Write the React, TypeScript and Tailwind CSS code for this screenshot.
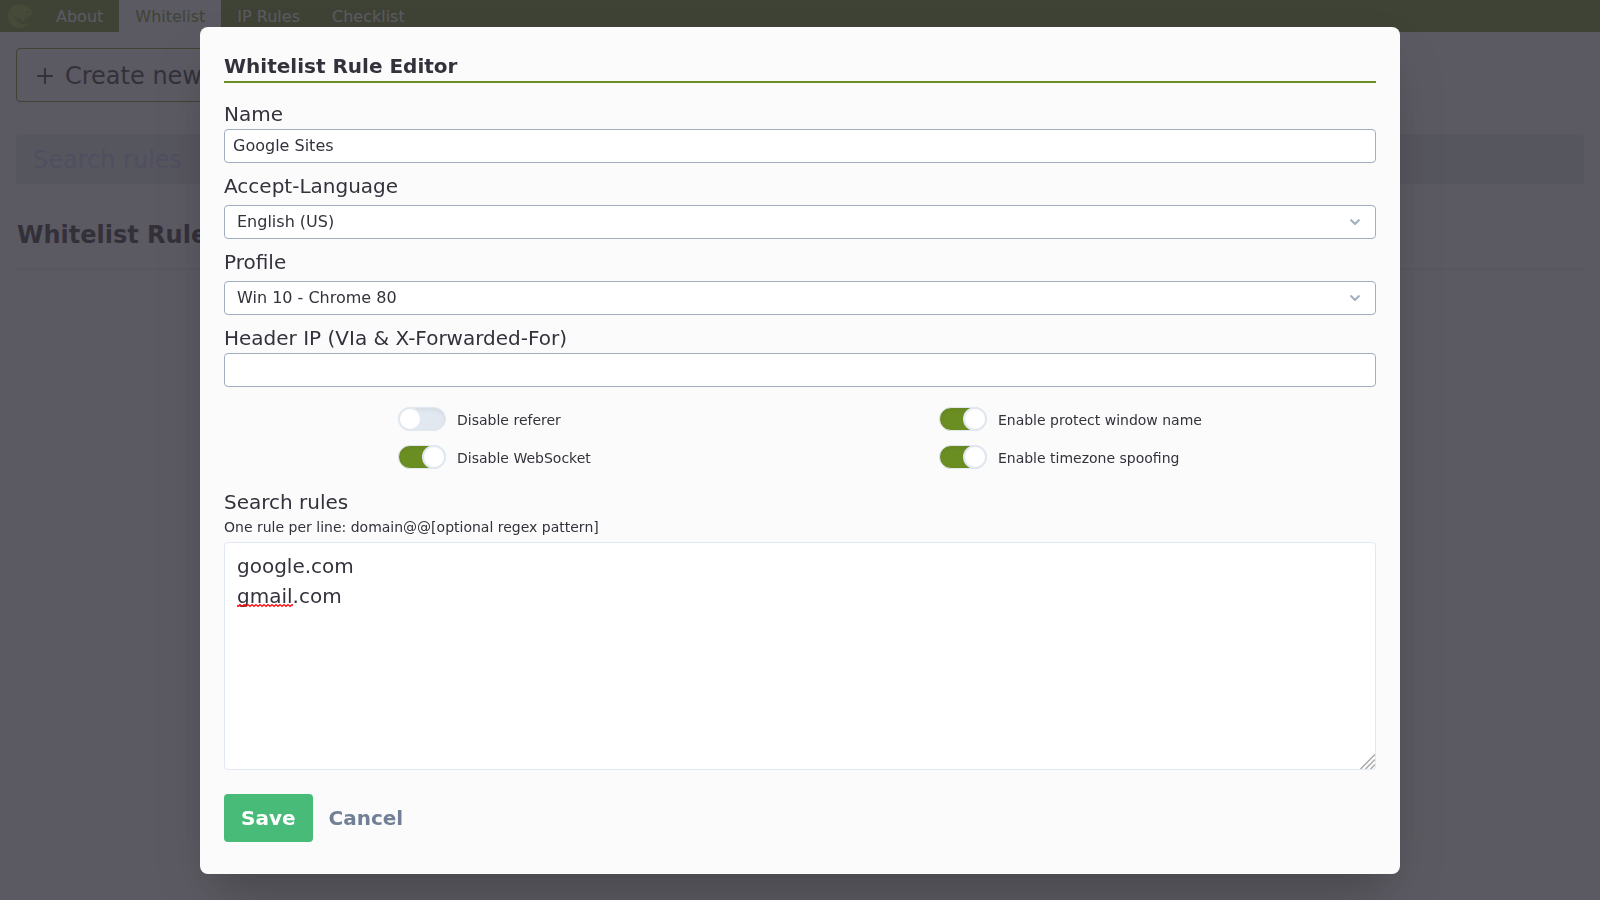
import { useState } from 'react';
import type { ReactNode } from 'react';

const tabs = ['About', 'Whitelist', 'IP Rules', 'Checklist'];

function Logo() {
  return (
    <svg viewBox="0 0 24 24" className="size-6" aria-hidden="true">
      <path
        fill="#8bb32e"
        d="M10.5 0.2C4.6 0.8 0 5.6 0 12c0 6.6 5 11.8 11.4 11.8 4.6 0 8.4-2 10.4-5.6-2.600 1.900-5.400 2.500-8.200 1.700-3.600-1-6.400-3.600-7.800-7.600 1.900 1.700 4.200 2.500 6.800 2.300.6 1.900 2.100 3 4.600 3.200-.7-1.200-.8-2.300-.3-3.300 1.300-.3 2.400-.1 3.500.5-.1-1.200-.6-2-1.500-2.600 2-.2 3.800-.9 5.100-2.400-.1-1.700-.6-3-1.600-3.900C21.600 3.400 20 2 18 .5c.1 1 .2 1.700.1 2.300C16 .6 13.400-.1 10.500.2z"
      />
      <circle cx="20" cy="8" r="0.9" fill="#55731b" />
    </svg>
  );
}

function PlusIcon() {
  return (
    <svg viewBox="0 0 24 24" className="mr-2 size-6" fill="none" stroke="currentColor" strokeWidth="2" strokeLinecap="round" aria-hidden="true">
      <path d="M12 5v14M5 12h14" />
    </svg>
  );
}

function Field({ id, label, children }: { id: string; label: string; children: ReactNode }) {
  return (
    <div className="mb-2">
      <label htmlFor={id} className="block text-xl leading-[30px]">
        {label}
      </label>
      {children}
    </div>
  );
}

function TextInput({ id, value }: { id: string; value: string }) {
  return (
    <input
      id={id}
      type="text"
      defaultValue={value}
      className="block w-full rounded border border-[#a0aec0] bg-white px-2 py-1 text-base leading-6"
    />
  );
}

function Select({ id, options }: { id: string; options: string[] }) {
  return (
    <div className="relative mt-1">
      <select
        id={id}
        className="block w-full appearance-none rounded border border-[#a0aec0] bg-white py-1 pr-10 pl-3 text-base leading-6"
      >
        {options.map((option) => (
          <option key={option}>{option}</option>
        ))}
      </select>
      <svg viewBox="0 0 24 24" className="pointer-events-none absolute top-1/2 right-[9px] size-6 -translate-y-1/2" fill="#a0aec0" aria-hidden="true">
        <path d="M15.3 9.3a1 1 0 0 1 1.4 1.4l-4 4a1 1 0 0 1-1.4 0l-4-4a1 1 0 0 1 1.4-1.4l3.3 3.29 3.3-3.29z" />
      </svg>
    </div>
  );
}

function Toggle({ label, initial }: { label: string; initial: boolean }) {
  const [on, setOn] = useState(initial);
  return (
    <label className="flex items-end text-sm leading-[22px]">
      <input
        type="checkbox"
        checked={on}
        onChange={() => setOn(!on)}
        className="mr-[11px] h-6 w-12 shrink-0 appearance-none rounded-full border border-[#e2e8f0] bg-[#e2e8f0] shadow-[inset_0_2px_4px_0_rgba(0,0,0,0.06)] before:-m-px before:block before:size-6 before:rounded-full before:border-2 before:border-[#e2e8f0] before:bg-white checked:bg-[#6b8e23] checked:before:ml-[23px]"
      />
      {label}
    </label>
  );
}

function RuleEditor() {
  return (
    <form
      role="dialog"
      aria-labelledby="editor-title"
      onSubmit={(event) => event.preventDefault()}
      className="w-3/4 rounded-lg bg-[#fbfbfb] px-6 pt-6 pb-8 shadow-2xl"
    >
      <h2 id="editor-title" className="mb-4 border-b-2 border-[#6b8e23] text-xl leading-[30px] font-bold">
        Whitelist Rule Editor
      </h2>
      <Field id="name" label="Name">
        <TextInput id="name" value="Google Sites" />
      </Field>
      <Field id="language" label="Accept-Language">
        <Select id="language" options={['English (US)']} />
      </Field>
      <Field id="profile" label="Profile">
        <Select id="profile" options={['Win 10 - Chrome 80']} />
      </Field>
      <Field id="header-ip" label="Header IP (VIa & X-Forwarded-For)">
        <TextInput id="header-ip" value="" />
      </Field>
      <div className="mt-5 mb-[18px] flex justify-around">
        <div className="flex flex-col gap-3.5">
          <Toggle label="Disable referer" initial={false} />
          <Toggle label="Disable WebSocket" initial />
        </div>
        <div className="flex flex-col gap-3.5">
          <Toggle label="Enable protect window name" initial />
          <Toggle label="Enable timezone spoofing" initial />
        </div>
      </div>
      <label htmlFor="rules" className="block text-xl leading-[30px]">
        Search rules
      </label>
      <p className="mb-1 text-sm leading-[21px]">One rule per line: domain@@[optional regex pattern]</p>
      <div className="relative">
        <textarea
          id="rules"
          spellCheck={false}
          defaultValue={'google.com\ngmail.com'}
          className="block h-[228px] w-full resize-none rounded border border-[#e2e8f0] bg-white px-3 py-2 text-xl leading-[30px]"
        />
        <svg className="pointer-events-none absolute top-[62px] left-[13px] h-1 w-14" aria-hidden="true">
          <defs>
            <pattern id="squiggle" width="4" height="4" patternUnits="userSpaceOnUse">
              <path d="M-1 0.5L1 2.5L3 0.5L5 2.5" fill="none" stroke="#ff0000" strokeWidth="1.2" />
            </pattern>
          </defs>
          <rect width="56" height="4" fill="url(#squiggle)" />
        </svg>
        <svg viewBox="0 0 15 15" className="pointer-events-none absolute right-px bottom-px size-[15px]" fill="none" stroke="#aaaaaa" strokeWidth="1.5" aria-hidden="true">
          <path d="M0.5 15L15 0.5M5.5 15L15 5.5M10.5 15L15 10.5" />
        </svg>
      </div>
      <div className="mt-6 flex text-xl leading-[30px] font-bold">
        <button type="submit" className="rounded bg-[#48bb78] px-[17px] py-[9px] text-white">
          Save
        </button>
        <button type="button" className="px-4 py-[9px] text-[#718096]">
          Cancel
        </button>
      </div>
    </form>
  );
}

export default function App() {
  return (
    <div className="min-h-screen bg-[#fbfbfb] font-['DejaVu_Sans',sans-serif] text-[#33313b]">
      <nav className="flex bg-[#6b8e23] text-base leading-6 text-[#fbfbfb]">
        <div className="flex w-10 items-center pl-2">
          <Logo />
        </div>
        {tabs.map((tab) => (
          <a
            key={tab}
            href="#"
            className={tab === 'Whitelist' ? 'bg-[#fbfbfb] px-4 pt-[5px] pb-[3px] text-[#6b8e23]' : 'px-4 pt-[5px] pb-[3px]'}
          >
            {tab}
          </a>
        ))}
      </nav>
      <main className="p-4 text-2xl">
        <button type="button" className="flex items-center rounded border border-[#6b8e23] px-4 pt-[9px] pb-[7px] leading-9">
          <PlusIcon />
          Create new rule
        </button>
        <input
          type="text"
          aria-label="Search rules"
          placeholder="Search rules"
          className="mt-8 block h-[50px] w-full rounded border border-[#e2e8f0] bg-[#e2e8f0] px-4 pt-0.5 placeholder:text-[#c0c4f0]"
        />
        <h1 className="mt-8 border-b-2 border-[#ebeff4] pt-px pb-[15px] pl-px leading-9 font-bold">Whitelist Rules</h1>
      </main>
      <div className="fixed inset-0 flex items-center justify-center bg-[#33313b]/80">
        <RuleEditor />
      </div>
    </div>
  );
}
